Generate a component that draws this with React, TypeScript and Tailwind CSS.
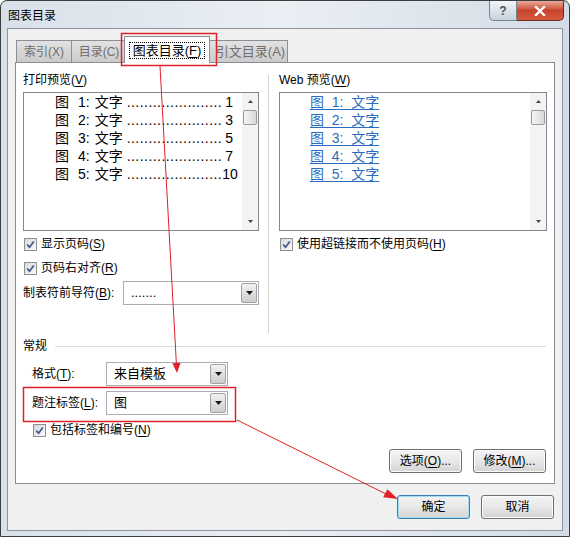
import React from "react";

// Win7-style "图表目录" dialog with red annotations

const entries = ["1", "2", "3", "4", "5"];
const pages = ["1", "3", "5", "7", "10"];

function Mn({ children }: { children: React.ReactNode }) {
  return <span className="underline underline-offset-2">{children}</span>;
}

function Check() {
  return (
    <span className="flex h-[13px] w-[13px] shrink-0 items-center justify-center border border-[#8e8f8f] bg-linear-to-br from-[#d6d9dc] to-[#fbfbfb]">
      <svg width="9" height="9" viewBox="0 0 9 9">
        <path d="M1.2 4.6 L3.6 7.2 L7.8 1.4" fill="none" stroke="#44598a" strokeWidth="1.7" />
      </svg>
    </span>
  );
}

function CheckRow({ children, className }: { children: React.ReactNode; className?: string }) {
  return (
    <div className={`flex h-[16px] items-center gap-[4px] ${className ?? ""}`}>
      <Check />
      <span className="text-[12px] leading-[16px]">{children}</span>
    </div>
  );
}

function Combo({ value, className }: { value: string; className: string }) {
  return (
    <div className={`flex h-[24px] border border-[#abadb3] bg-white ${className}`}>
      <span className="flex-1 pl-[7px] text-[13px] leading-[22px]">{value}</span>
      <span className="my-px mr-px flex w-[16px] items-center justify-center rounded-[2px] border border-[#9ea3aa] bg-linear-to-b from-[#f2f2f2] to-[#cdcdcd]">
        <svg width="7" height="4" viewBox="0 0 7 4">
          <path d="M0 0h7L3.5 4z" fill="#1a1a1a" />
        </svg>
      </span>
    </div>
  );
}

function Btn({ children, primary }: { children: React.ReactNode; primary?: boolean }) {
  return (
    <div
      className={`flex h-[24px] w-[73px] items-center justify-center rounded-[3px] border bg-linear-to-b from-[#f4f4f4] via-[#e8e8e8] to-[#d3d3d3] text-[12px] ${
        primary
          ? "border-[#3c7fb1] shadow-[inset_0_0_0_1px_#9fdcf6]"
          : "border-[#707070] shadow-[inset_0_0_0_1px_#fbfbfb]"
      }`}
    >
      {children}
    </div>
  );
}

function ScrollBar() {
  return (
    <div className="flex w-[16px] shrink-0 flex-col bg-[#f3f3f3]">
      <div className="flex h-[17px] items-center justify-center">
        <svg width="5" height="3" viewBox="0 0 5 3">
          <path d="M0 3h5L2.5 0z" fill="#444" />
        </svg>
      </div>
      <div className="ml-px mr-[1px] h-[15px] rounded-[2px] border border-[#9b9b9b] bg-linear-to-r from-[#f5f5f5] to-[#d9d9d9]" />
      <div className="flex-1" />
      <div className="flex h-[17px] items-center justify-center">
        <svg width="5" height="3" viewBox="0 0 5 3">
          <path d="M0 0h5L2.5 3z" fill="#444" />
        </svg>
      </div>
    </div>
  );
}

export default function App() {
  return (
    <div className="relative h-[537px] w-[570px] overflow-hidden rounded-t-[7px] border border-[#3d3d3d] bg-linear-to-r from-[#d8e1ea] via-[#eaeff4] to-[#d3dce6] font-['Liberation_Sans','Noto_Sans_CJK_SC',sans-serif] text-black">
      {/* title bar */}
      <div className="flex h-[27px] items-start justify-between">
        <span className="pl-[7px] pt-[5px] text-[12px] leading-[18px] font-['Noto_Sans_CJK_SC',sans-serif]">图表目录</span>
        <div className="mr-[5px] flex">
          <div className="flex h-[20px] w-[28px] items-center justify-center rounded-bl-[5px] border border-t-0 border-[#75838f] bg-linear-to-b from-[#f1f4f8] to-[#c8d2dc] text-[12px] font-bold text-[#4a5664]">
            ?
          </div>
          <div className="flex h-[20px] w-[47px] items-center justify-center rounded-br-[5px] border border-t-0 border-l-0 border-[#6b2a22] bg-linear-to-b from-[#e9a99a] via-[#c8432e] to-[#d75a3c]">
            <svg width="12" height="10" viewBox="0 0 12 10">
              <path d="M2 1 L10 9 M10 1 L2 9" stroke="#fff" strokeWidth="2.4" strokeLinecap="square" />
            </svg>
          </div>
        </div>
      </div>

      {/* client */}
      <div className="ml-[6px] h-[503px] w-[556px] border border-[#8d96a0] bg-[#f0f0f0]">
        <div className="ml-[7px] w-[540px]">
          {/* tabs */}
          <div className="flex h-[33px] items-end pl-px pt-[7px]">
            <div className="flex h-[22px] w-[56px] items-center justify-center border border-b-0 border-[#8c8e94] bg-linear-to-b from-[#e2e2e2] to-[#cbcbcb] text-[12px] text-[#6e6e6e]">
              索引(X)
            </div>
            <div className="-ml-px flex h-[22px] w-[56px] items-center justify-center border border-b-0 border-[#8c8e94] bg-linear-to-b from-[#e2e2e2] to-[#cbcbcb] text-[12px] text-[#6e6e6e]">
              目录(C)
            </div>
            <div className="relative z-10 -mb-px -ml-[3px] flex h-[27px] w-[86px] items-center justify-center border border-b-0 border-[#8c8e94] bg-white text-[13px]">
              <span className="border border-dotted border-black px-[3px] leading-[15px]">
                图表目录(<Mn>F</Mn>)
              </span>
            </div>
            <div className="-ml-px flex h-[22px] w-[79px] items-center justify-center border border-b-0 border-[#8c8e94] bg-linear-to-b from-[#e2e2e2] to-[#cbcbcb] pl-[4px] text-[13px] text-[#6e6e6e]">
              引文目录(A)
            </div>
          </div>

          {/* tab page */}
          <div className="h-[422px] border border-[#898c95] bg-white">
            <div className="flex h-[276px]">
              {/* left column */}
              <div className="ml-[7px] w-[236px] pt-[10px]">
                <div className="h-[14px] text-[12px] leading-[14px]">
                  打印预览(<Mn>V</Mn>)
                </div>
                <div className="mt-[5px] flex h-[139px] border border-[#828790]">
                  <div className="min-w-0 flex-1 pl-[31px] pr-[9px] text-[14px] leading-[18px]">
                    {entries.map((n, i) => (
                      <div key={n} className="flex whitespace-nowrap">
                        <span>图</span>
                        <span className="ml-[9px]">{n}:</span>
                        <span className="ml-[5px]">文字</span>
                        <span className="ml-[4px] tracking-[0.45px]">{"......................"}</span>
                        <span className="ml-auto">{pages[i]}</span>
                      </div>
                    ))}
                  </div>
                  <ScrollBar />
                </div>
                <CheckRow className="mt-[5px] pl-px">
                  显示页码(<Mn>S</Mn>)
                </CheckRow>
                <CheckRow className="mt-[8px] pl-px">
                  页码右对齐(<Mn>R</Mn>)
                </CheckRow>
                <div className="mt-[5px] flex h-[24px] items-center">
                  <span className="w-[100px] text-[12px]">
                    制表符前导符(<Mn>B</Mn>):
                  </span>
                  <Combo value="......." className="w-[136px]" />
                </div>
              </div>

              {/* divider */}
              <div className="w-[20px] pl-[9px] pt-[12px]">
                <div className="h-[258px] w-px bg-[#d2d2d2]" />
              </div>

              {/* right column */}
              <div className="w-[268px] pt-[10px]">
                <div className="h-[14px] text-[12px] leading-[14px]">
                  Web 预览(<Mn>W</Mn>)
                </div>
                <div className="mt-[5px] flex h-[139px] border border-[#828790]">
                  <div className="min-w-0 flex-1 pl-[30px] text-[14px] leading-[18px] text-[#2b6cc0]">
                    {entries.map((n) => (
                      <div key={n}>
                        <span className="underline underline-offset-2">
                          {"图\u00a0\u00a0" + n + ":\u00a0\u00a0文字"}
                        </span>
                      </div>
                    ))}
                  </div>
                  <ScrollBar />
                </div>
                <CheckRow className="mt-[5px] pl-px">
                  使用超链接而不使用页码(<Mn>H</Mn>)
                </CheckRow>
              </div>
            </div>

            {/* 常规 */}
            <div className="flex h-[14px] items-center pl-[7px] pr-[8px]">
              <span className="text-[12px]">常规</span>
              <div className="ml-[8px] h-px flex-1 bg-[#dcdcdc]" />
            </div>
            <div className="mt-[9px] flex h-[24px] items-center pl-[16px]">
              <span className="w-[74px] text-[12px]">
                格式(<Mn>T</Mn>):
              </span>
              <Combo value="来自模板" className="w-[122px]" />
            </div>
            <div className="mt-[5px] flex h-[24px] items-center pl-[16px]">
              <span className="w-[74px] text-[12px]">
                题注标签(<Mn>L</Mn>):
              </span>
              <Combo value="图" className="w-[122px]" />
            </div>
            <CheckRow className="mt-[7px] pl-[17px]">
              包括标签和编号(<Mn>N</Mn>)
            </CheckRow>
            <div className="mt-[11px] flex justify-end gap-[11px] pr-[8px]">
              <Btn>
                选项(<Mn>O</Mn>)...
              </Btn>
              <Btn>
                修改(<Mn>M</Mn>)...
              </Btn>
            </div>
          </div>
        </div>

        {/* OK / Cancel */}
        <div className="mt-[11px] flex justify-end gap-[11px] pr-[8px]">
          <Btn primary>确定</Btn>
          <Btn>取消</Btn>
        </div>
      </div>

      {/* red annotations */}
      <svg
        className="pointer-events-none absolute left-[-1px] top-[-1px]"
        width="570"
        height="537"
        viewBox="0 0 570 537"
      >
        <rect x="121.5" y="33.5" width="95" height="32" fill="none" stroke="#e0202a" strokeWidth="1.5" />
        <rect x="23.5" y="387.5" width="212" height="34" fill="none" stroke="#e0202a" strokeWidth="1.5" />
        <line x1="160" y1="66" x2="176.4" y2="364" stroke="#e0202a" strokeWidth="1" />
        <polygon points="177,373 180.6,362.8 172.4,363.2" fill="#e0202a" />
        <line x1="237" y1="420" x2="386" y2="494" stroke="#e0202a" strokeWidth="1" />
        <polygon points="398,499 383.2,497.2 387.4,489.2" fill="#e0202a" />
      </svg>
    </div>
  );
}
